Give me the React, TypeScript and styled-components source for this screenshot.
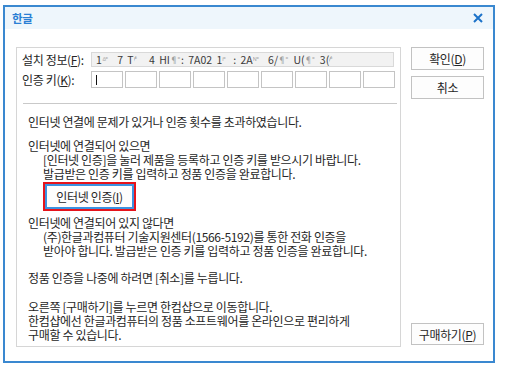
import styled, { createGlobalStyle } from "styled-components";

const GlobalStyle = createGlobalStyle`
  html, body {
    margin: 0;
    padding: 0;
    background: #ffffff;
  }
  body {
    font-family: "Noto Sans CJK KR", "Noto Sans", sans-serif;
    font-size: 12px;
    color: #262626;
  }
`;

const Page = styled.div`
  padding: 5px 0 0 3px;
`;

const Window = styled.div`
  width: 492px;
  height: 358px;
  box-sizing: border-box;
  border: 2px solid #3a88d0;
  background: #ffffff;
  display: flex;
  flex-direction: column;
`;

const TitleBar = styled.div`
  height: 22px;
  flex: none;
  background: #eef6fc;
  display: flex;
  align-items: center;
  justify-content: space-between;
  padding: 0 10px 0 7px;
`;

const Logo = styled.span`
  font-size: 11.5px;
  font-weight: 700;
  color: #2a7fd4;
  letter-spacing: -0.3px;
`;

const CloseIcon = styled.svg`
  width: 10px;
  height: 10px;
  display: block;
`;

const Body = styled.div`
  flex: 1;
  display: flex;
  gap: 10px;
  padding: 18px 9px 14px 11px;
`;

const Panel = styled.div`
  width: 385px;
  height: 300px;
  box-sizing: border-box;
  border: 1px solid #d6d6d6;
  padding: 4px 5px 0 5px;
  display: flex;
  flex-direction: column;
`;

const FieldRow = styled.div<{ $gap?: number }>`
  display: flex;
  align-items: center;
  margin-top: ${(p) => p.$gap ?? 0}px;
  letter-spacing: -0.35px;
`;

const FieldLabel = styled.span`
  width: 69px;
  flex: none;
  line-height: 15px;
`;

const ReadOnlyInput = styled.div`
  width: 303px;
  height: 15px;
  box-sizing: border-box;
  border: 1px solid #d9d9d9;
  background: #f2f2f2;
  color: #3a3a3a;
  font-size: 10.5px;
  line-height: 13px;
  padding-left: 4px;
  white-space: nowrap;
  overflow: hidden;
  letter-spacing: 0;
  word-spacing: 2px;
`;

const Smudge = styled.span`
  display: inline-block;
  width: 11px;
  color: #a0a0a0;
  font-size: 8px;
  letter-spacing: -0.5px;
  overflow: hidden;
  vertical-align: top;
`;

const KeyBoxes = styled.div`
  display: flex;
  gap: 2px;
`;

const KeyBox = styled.div<{ $focused?: boolean }>`
  width: 32px;
  height: 17px;
  box-sizing: border-box;
  border: 1px solid #c4c4c4;
  background: #ffffff;
  position: relative;

  &::after {
    content: "";
    display: ${(p) => (p.$focused ? "block" : "none")};
    position: absolute;
    left: 4px;
    top: 3px;
    width: 1px;
    height: 10px;
    background: #111;
  }
`;

const Divider = styled.div`
  height: 1px;
  background: #c9c9c9;
  margin: 15px 0 0 1px;
  width: 374px;
`;

const Message = styled.div`
  padding: 11px 0 0 6px;
  letter-spacing: -0.35px;
  line-height: 14px;
`;

/* first line flush, following lines indented (hanging indent) */
const Para = styled.p<{ $gap?: number; $hanging?: boolean }>`
  margin: ${(p) => p.$gap ?? 0}px 0 0;
  white-space: nowrap;
  padding-left: ${(p) => (p.$hanging ? 15 : 0)}px;
  text-indent: ${(p) => (p.$hanging ? -15 : 0)}px;
`;

const HighlightFrame = styled.div`
  margin: 1px 0 0 15px;
  width: 93px;
  height: 29px;
  box-sizing: border-box;
  border: 2px solid #e5141c;
  display: flex;
`;

const FocusButton = styled.button`
  flex: 1;
  margin: 0;
  border: 2px solid #3b92e0;
  background: #fdfdfd;
  font: inherit;
  color: #262626;
  letter-spacing: -0.35px;
  padding: 0;
`;

const ButtonColumn = styled.div`
  width: 73px;
  display: flex;
  flex-direction: column;
  gap: 6px;
`;

const DialogButton = styled.button<{ $bottom?: boolean }>`
  height: ${(p) => (p.$bottom ? 22 : 23)}px;
  margin: ${(p) => (p.$bottom ? "auto 0 2px" : "0")};
  box-sizing: border-box;
  border: 1px solid #c2c2c2;
  background: #fdfdfd;
  font: inherit;
  color: #262626;
  letter-spacing: -0.35px;
  padding: 0;
`;

export default function App() {
  return (
    <>
      <GlobalStyle />
      <Page>
        <Window>
          <TitleBar>
            <Logo>한글</Logo>
            <CloseIcon viewBox="0 0 10 10">
              <path d="M1 1 L9 9 M9 1 L1 9" stroke="#1b72c9" strokeWidth="2" />
            </CloseIcon>
          </TitleBar>
          <Body>
            <Panel>
              <FieldRow>
                <FieldLabel>
                  설치 정보(<u>F</u>):
                </FieldLabel>
                <ReadOnlyInput>
                  1<Smudge>ᐞ⁼</Smudge> 7 T<Smudge>⁄⁼</Smudge> 4 HI<Smudge>¶⁼</Smudge>: 7A02 1
                  <Smudge>ⁱ⁼</Smudge>: 2A<Smudge>ᴺ⁼</Smudge> 6/<Smudge>¶⁼</Smudge> U(
                  <Smudge>¶⁼</Smudge> 3(<Smudge>⁄⁼</Smudge>
                </ReadOnlyInput>
              </FieldRow>
              <FieldRow $gap={4}>
                <FieldLabel>
                  인증 키(<u>K</u>):
                </FieldLabel>
                <KeyBoxes>
                  {Array.from({ length: 9 }, (_, i) => (
                    <KeyBox key={i} $focused={i === 0} />
                  ))}
                </KeyBoxes>
              </FieldRow>
              <Divider />
              <Message>
                <Para>인터넷 연결에 문제가 있거나 인증 횟수를 초과하였습니다.</Para>
                <Para $gap={10} $hanging>
                  인터넷에 연결되어 있으면
                  <br />
                  [인터넷 인증]을 눌러 제품을 등록하고 인증 키를 받으시기 바랍니다.
                  <br />
                  발급받은 인증 키를 입력하고 정품 인증을 완료합니다.
                </Para>
                <HighlightFrame>
                  <FocusButton>
                    인터넷 인증(<u>I</u>)
                  </FocusButton>
                </HighlightFrame>
                <Para $gap={5} $hanging>
                  인터넷에 연결되어 있지 않다면
                  <br />
                  (주)한글과컴퓨터 기술지원센터(1566-5192)를 통한 전화 인증을
                  <br />
                  받아야 합니다. 발급받은 인증 키를 입력하고 정품 인증을 완료합니다.
                </Para>
                <Para $gap={13}>정품 인증을 나중에 하려면 [취소]를 누릅니다.</Para>
                <Para $gap={15}>
                  오른쪽 [구매하기]를 누르면 한컴샵으로 이동합니다.
                  <br />
                  한컴샵에선 한글과컴퓨터의 정품 소프트웨어를 온라인으로 편리하게
                  <br />
                  구매할 수 있습니다.
                </Para>
              </Message>
            </Panel>
            <ButtonColumn>
              <DialogButton>
                확인(<u>D</u>)
              </DialogButton>
              <DialogButton>취소</DialogButton>
              <DialogButton $bottom>
                구매하기(<u>P</u>)
              </DialogButton>
            </ButtonColumn>
          </Body>
        </Window>
      </Page>
    </>
  );
}
